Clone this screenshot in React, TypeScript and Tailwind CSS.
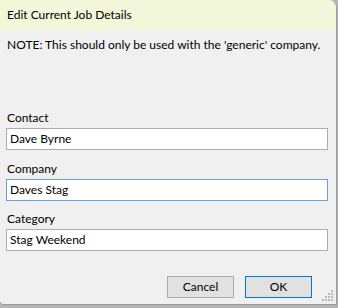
import React from 'react'

const font = { fontFamily: 'Lato, "Noto Sans", sans-serif' }

function Field({ label, value, focused }: { label: string; value: string; focused?: boolean }) {
  return (
    <div className="flex flex-col">
      <label className="h-4 leading-4 text-[12px] text-black ml-[7px]">{label}</label>
      <div
        className={
          'mt-[2px] ml-[6px] w-[322px] h-[22px] bg-white border flex items-center px-[3px] text-[12px] text-black ' +
          (focused ? 'border-[#6a9fdc]' : 'border-[#acacac]')
        }
      >
        {value}
      </div>
    </div>
  )
}

function Grip() {
  const dots = [
    [9, 0],
    [6, 3], [9, 3],
    [3, 6], [6, 6], [9, 6],
    [0, 9], [3, 9], [6, 9], [9, 9],
  ]
  return (
    <svg width="12" height="12" className="absolute right-[2px] bottom-[2px]">
      {dots.map(([x, y], i) => (
        <rect key={i} x={x} y={y} width="2" height="2" fill="#b8b8c4" />
      ))}
    </svg>
  )
}

export default function App() {
  return (
    <div className="w-[338px] h-[308px] bg-[#b4b4b4] flex" style={font}>
      <div className="relative w-[337px] h-[305px] flex flex-col bg-[#f0f0f0] border-r border-b border-[#9a9a9a] rounded-tr-[8px] rounded-bl-[4px] overflow-hidden">
        <div className="h-[30px] bg-[#f2f7da] flex items-center px-[7px] text-[12px] text-black">
          Edit Current Job Details
        </div>
        <div className="mt-[7px] px-[7px] h-4 leading-4 text-[12px] text-black whitespace-nowrap">
          NOTE: This should only be used with the 'generic' company.
        </div>
        <div className="mt-[57px] flex flex-col">
          <Field label="Contact" value="Dave Byrne" />
          <div className="h-[11px]" />
          <Field label="Company" value="Daves Stag" focused />
          <div className="h-[10px]" />
          <Field label="Category" value="Stag Weekend" />
        </div>
        <div className="mt-[25px] flex justify-end gap-[11px] pr-[24px]">
          <button className="w-[67px] h-[22px] bg-[#e1e1e1] border border-[#adadad] text-[12px] text-black">
            Cancel
          </button>
          <button className="w-[67px] h-[22px] bg-[#e1e1e1] border border-[#0078d7] text-[12px] text-black">
            OK
          </button>
        </div>
        <Grip />
      </div>
    </div>
  )
}
